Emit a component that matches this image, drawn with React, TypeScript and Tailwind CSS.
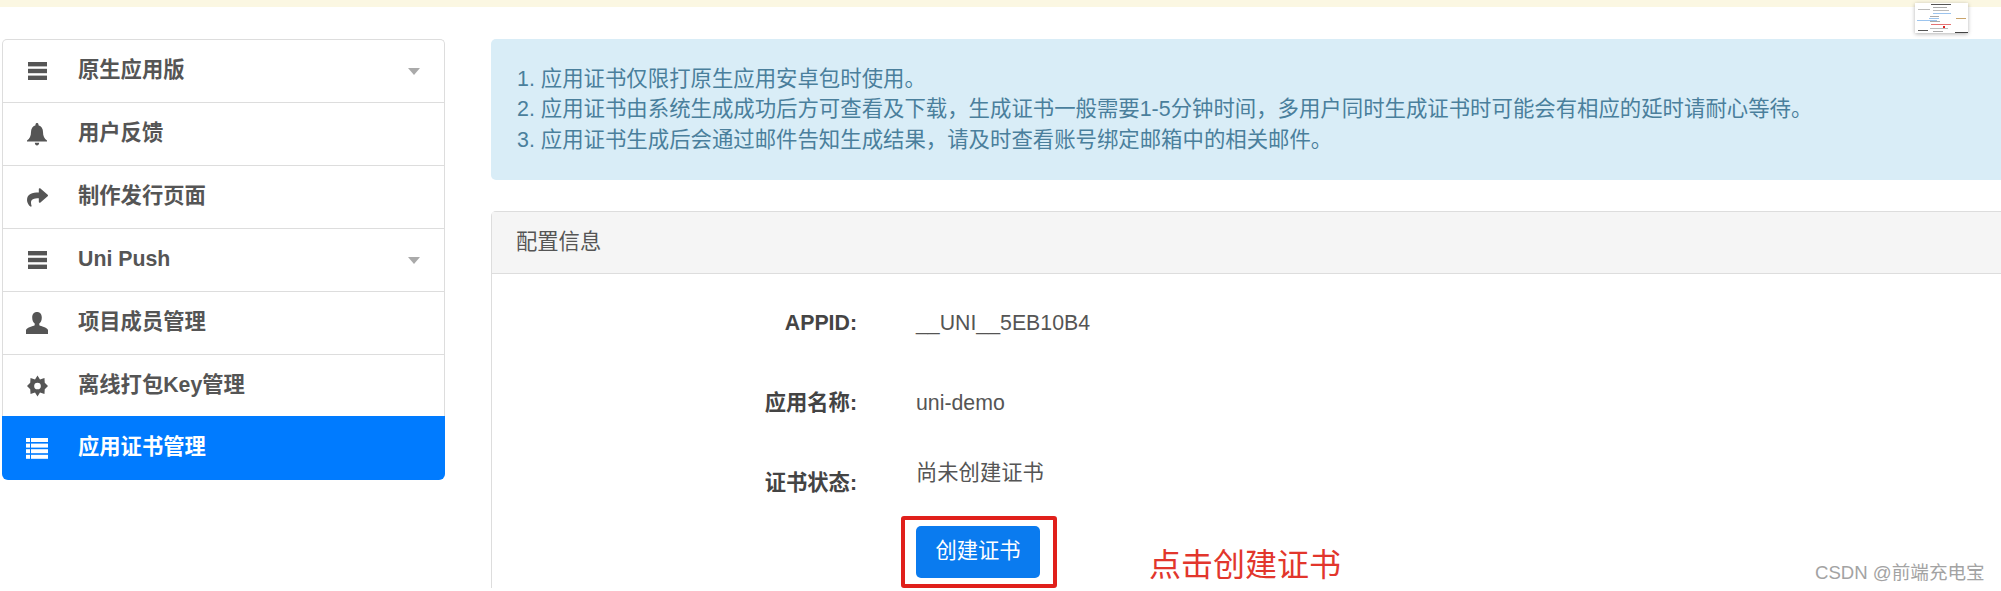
import { FaShare } from "react-icons/fa";

const FONT = "font-['Liberation_Sans','Noto_Sans_CJK_SC',sans-serif]";

function MenuBars() {
  return (
    <svg width="19" height="18" viewBox="0 0 19 18" fill="currentColor">
      <rect x="0" y="0" width="19" height="4.400" />
      <rect x="0" y="6.800" width="19" height="4.400" />
      <rect x="0" y="13.600" width="19" height="4.400" />
    </svg>
  );
}

function BellIcon() {
  return (
    <svg width="20" height="23" viewBox="0 0 20 23" fill="currentColor">
      <path d="M10 0c.900 0 1.500.600 1.500 1.500v.700c3 .800 4.500 3.400 4.500 6.800 0 4 1.300 6.500 4 8.500v1H0v-1c2.700-2 4-4.500 4-8.500 0-3.400 1.500-6 4.500-6.800v-.700C8.500.600 9.100 0 10 0z" />
      <path d="M7.800 19.800h4.400c-.200 1.700-1 2.800-2.200 2.800s-2-1.100-2.200-2.800z" />
    </svg>
  );
}

function UserIcon() {
  return (
    <svg width="22" height="22" viewBox="0 0 22 22" fill="currentColor">
      <path d="M11 0c3 0 4.800 2.200 4.800 5.400 0 2.600-1 5-2.500 6.200v1.600c1.600 1 7.700 2 8.700 4.800V22H0v-4c1-2.800 7.100-3.800 8.700-4.800v-1.600C7.200 10.400 6.200 8 6.200 5.400 6.200 2.200 8 0 11 0z" />
    </svg>
  );
}

function CogIcon() {
  return (
    <svg width="21" height="22" viewBox="0 0 22 22">
      <path
        fill="currentColor"
        fillRule="evenodd"
        d="M11 0l2.600 4.100 4.700-1.400.3 4.900 3.400 3.400-3.400 3.400-.3 4.900-4.700-1.400L11 22l-2.600-4.100-4.700 1.400-.3-4.900L0 11l3.400-3.400.3-4.900 4.700 1.400L11 0zm0 7.500a3.500 3.500 0 100 7 3.500 3.500 0 000-7z"
      />
    </svg>
  );
}

function ThList() {
  return (
    <svg width="22" height="21" viewBox="0 0 22 21" fill="currentColor">
      <rect x="0" y="0" width="4" height="4" />
      <rect x="0" y="5.600" width="4" height="4" />
      <rect x="0" y="11.200" width="4" height="4" />
      <rect x="0" y="16.800" width="4" height="4" />
      <rect x="5" y="0" width="17" height="4" />
      <rect x="5" y="5.600" width="17" height="4" />
      <rect x="5" y="11.200" width="17" height="4" />
      <rect x="5" y="16.800" width="17" height="4" />
    </svg>
  );
}

const menu = [
  { label: "原生应用版", icon: <MenuBars />, caret: true },
  { label: "用户反馈", icon: <BellIcon /> },
  { label: "制作发行页面", icon: <FaShare size={21} /> },
  { label: "Uni Push", icon: <MenuBars />, caret: true },
  { label: "项目成员管理", icon: <UserIcon /> },
  { label: "离线打包Key管理", icon: <CogIcon /> },
];

function Sidebar() {
  return (
    <div className="w-[443px] shrink-0 rounded-[5px] text-[21.3px] font-bold text-[#555]">
      {menu.map((item) => (
        <div
          key={item.label}
          className="flex h-[63px] items-center border border-b-0 border-[#dddddd] first:rounded-t-[5px] last:border-b"
        >
          <span className="mr-[7px] flex w-[68px] shrink-0 justify-center">{item.icon}</span>
          <span className="flex-1">{item.label}</span>
          {item.caret && (
            <span className="mr-[24px] h-0 w-0 border-x-[6px] border-t-[7px] border-x-transparent border-t-[#aaaaaa]" />
          )}
        </div>
      ))}
      <div className="-mt-px flex h-[64px] items-center rounded-b-[6px] bg-[#007bff] text-white">
        <span className="mr-[6px] flex w-[70px] shrink-0 justify-center">
          <ThList />
        </span>
        <span>应用证书管理</span>
      </div>
    </div>
  );
}

function Notice() {
  return (
    <div className="flex h-[141px] flex-col justify-center rounded-l-[5px] bg-[#d9edf7] pl-[26px] text-[21.4px] leading-[30.5px] whitespace-nowrap text-[#4a7f9c]">
      <p>1. 应用证书仅限打原生应用安卓包时使用。</p>
      <p>2. 应用证书由系统生成成功后方可查看及下载，生成证书一般需要1-5分钟时间，多用户同时生成证书时可能会有相应的延时请耐心等待。</p>
      <p>3. 应用证书生成后会通过邮件告知生成结果，请及时查看账号绑定邮箱中的相关邮件。</p>
    </div>
  );
}

function ConfigPanel() {
  return (
    <div className="mt-[31px] rounded-tl-[5px] border-t border-l border-[#dddddd] text-[21.3px]">
      <div className="flex h-[62px] items-center border-b border-[#dddddd] bg-[#f5f5f5] pl-[24px] text-[#555]">
        配置信息
      </div>
      <div className="pt-[35px]">
        <div className="mb-[50px] flex h-[30px] items-center">
          <span className="w-[365px] text-right font-bold text-[#444]">APPID:</span>
          <span className="ml-[59px] text-[#555]">__UNI__5EB10B4</span>
        </div>
        <div className="mb-[39px] flex h-[30px] items-center">
          <span className="w-[365px] text-right font-bold text-[#444]">应用名称:</span>
          <span className="ml-[59px] text-[#555]">uni-demo</span>
        </div>
        <div className="mb-[18px] flex h-[40px] items-start leading-[30px]">
          <span className="mt-[10px] w-[365px] text-right font-bold text-[#444]">证书状态:</span>
          <span className="ml-[59px] text-[#555]">尚未创建证书</span>
        </div>
        <div className="ml-[409px] flex items-start">
          <div className="h-[72px] w-[156px] rounded-[3px] border-[4px] border-[#e0201b] pt-[6px] pl-[11px]">
            <button className="h-[52px] w-[124px] rounded-[5px] bg-[#0a7bef] text-white">创建证书</button>
          </div>
          <span className="mt-[32px] ml-[92px] text-[32px] leading-[34px] text-[#e2362c]">点击创建证书</span>
        </div>
      </div>
    </div>
  );
}

// tiny page preview that floats over the top right corner
function Thumbnail() {
  return (
    <div className="absolute top-[3px] left-[1915px] h-[30px] w-[53px] bg-white shadow-[0_1px_4px_rgba(0,0,0,0.3)]">
      <svg width="53" height="30" viewBox="0 0 53 30">
        <rect x="16" y="1" width="20" height="1" fill="#555" />
        <rect x="3" y="6" width="12" height="1" fill="#bbb" />
        <rect x="18" y="4" width="14" height="1" fill="#aaa" />
        <rect x="18" y="7" width="16" height="1" fill="#bbb" />
        <rect x="18" y="10" width="18" height="1" fill="#9cc4ee" />
        <rect x="15" y="13" width="9" height="1" fill="#aaa" />
        <rect x="14" y="15" width="10" height="1" fill="#9cc4ee" />
        <rect x="2" y="17" width="20" height="1" fill="#9cc4ee" />
        <rect x="41" y="15" width="10" height="1" fill="#c9a36a" />
        <rect x="15" y="18" width="10" height="1" fill="#aaa" />
        <rect x="16" y="21" width="20" height="1" fill="#e57373" />
        <rect x="28" y="23" width="2" height="2" fill="#e02020" />
        <rect x="15" y="25" width="18" height="1" fill="#bbb" />
        <rect x="3" y="27" width="10" height="1" fill="#555" />
        <rect x="18" y="28" width="10" height="1" fill="#aaa" />
        <rect x="40" y="29" width="13" height="1" fill="#444" />
      </svg>
    </div>
  );
}

export default function App() {
  return (
    <div className={`relative h-[591px] w-[2001px] overflow-hidden bg-white ${FONT}`}>
      <div className="h-[7px] bg-[#fbf7e2]" />
      <div className="flex pt-[32px] pl-[2px]">
        <Sidebar />
        <main className="ml-[46px] min-w-0 flex-1">
          <Notice />
          <ConfigPanel />
        </main>
      </div>
      <Thumbnail />
      <span className="absolute top-[562px] left-[1815px] text-[18.6px] leading-[22px] text-[#a3a3a3]">
        CSDN @前端充电宝
      </span>
    </div>
  );
}
